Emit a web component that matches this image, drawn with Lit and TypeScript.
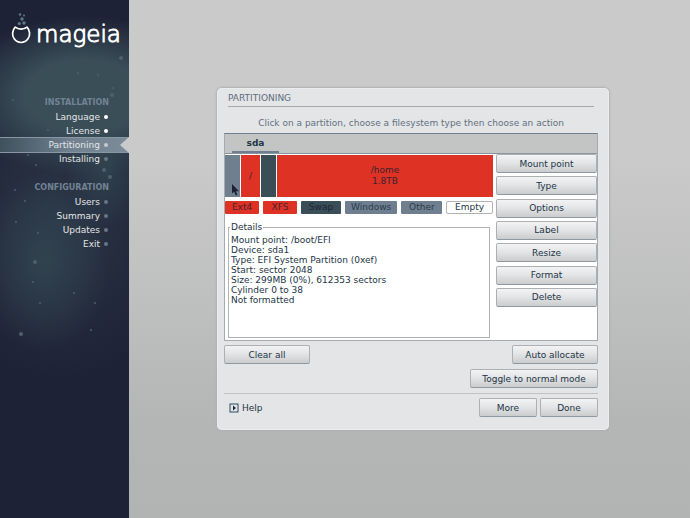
import { LitElement, html, svg, css, nothing } from "lit";
import { customElement, state } from "lit/decorators.js";
import { classMap } from "lit/directives/class-map.js";

interface Step {
  label: string;
  status: "done" | "current" | "todo";
}

const INSTALLATION: Step[] = [
  { label: "Language", status: "done" },
  { label: "License", status: "done" },
  { label: "Partitioning", status: "current" },
  { label: "Installing", status: "todo" },
];

const CONFIGURATION: Step[] = [
  { label: "Users", status: "todo" },
  { label: "Summary", status: "todo" },
  { label: "Updates", status: "todo" },
  { label: "Exit", status: "todo" },
];

const STARS: Array<[number, number, number]> = [
  [121, 58, 2], [78, 73, 1], [98, 75, 1], [113, 88, 1], [112, 95, 2], [13, 100, 1],
  [48, 130, 1], [28, 155, 1], [36, 165, 1], [104, 170, 2], [110, 177, 2], [15, 190, 1],
  [25, 201, 1], [16, 222, 1], [38, 233, 1], [35, 262, 2], [33, 282, 1], [74, 293, 1],
  [95, 303, 1], [21, 334, 2], [91, 330, 1], [40, 303, 1],
];

const FACTS = [
  "Mount point: /boot/EFI",
  "Device: sda1",
  "Type: EFI System Partition (0xef)",
  "Start: sector 2048",
  "Size: 299MB (0%), 612353 sectors",
  "Cylinder 0 to 38",
  "Not formatted",
];

const ACTIONS = ["Mount point", "Type", "Options", "Label", "Resize", "Format", "Delete"];

@customElement("install-steps")
export class InstallSteps extends LitElement {
  static styles = css`
    :host {
      display: block;
      position: relative;
      background:
        radial-gradient(ellipse 64px 90px at 44px 262px, #354954c0, #35495400),
        radial-gradient(ellipse 40px 60px at 106px 170px, #354954b0, #35495400),
        radial-gradient(ellipse 130px 80px at 84px 96px, #3a4e58 45%, #3a4e5800),
        radial-gradient(ellipse 130px 160px at 60px 220px, #3a4e5870, #3a4e5800),
        #1e2236;
      color: #e4e5e7;
      font-size: 9px;
      line-height: 14px;
    }
    .sky {
      position: absolute;
      inset: 0;
      width: 100%;
      height: 100%;
      fill: #4c616c;
    }
    .brand {
      position: relative;
      display: flex;
      align-items: flex-start;
      height: 84px;
      padding: 12px 0 0 11px;
      gap: 4px;
    }
    .flask {
      width: 21px;
      height: 33px;
      flex: none;
    }
    .name {
      margin-top: 8px;
      font-size: 23px;
      line-height: 28px;
      font-weight: 200;
      color: #fff;
      -webkit-text-stroke: 1px #fff;
    }
    section {
      position: relative;
      margin-bottom: 15px;
    }
    h2 {
      margin: 0;
      padding-right: 20px;
      text-align: right;
      font-size: 8px;
      line-height: 14px;
      font-weight: 700;
      color: #728394;
    }
    ol {
      list-style: none;
      margin: 0;
      padding: 0;
    }
    li {
      display: flex;
      justify-content: flex-end;
      align-items: center;
      gap: 4px;
      height: 14px;
      padding-right: 21px;
    }
    .dot {
      width: 4px;
      height: 4px;
      border-radius: 2px;
      background: #667788;
    }
    .done .dot {
      background: #fff;
    }
    .current {
      position: relative;
      height: 16px;
      margin: -1px 0;
      background: linear-gradient(90deg, #3f515d, #718190 55%, #7c8b98);
      border-block: 1px solid #8997a2;
      box-sizing: border-box;
    }
    .current::after {
      content: "";
      position: absolute;
      right: 0;
      top: -1px;
      bottom: -1px;
      width: 9px;
      background: #c9c9c9;
      clip-path: polygon(100% 0, 0 50%, 100% 100%);
    }
    .current .dot {
      background: #c9c9c9;
    }
  `;

  private group(title: string, steps: Step[]) {
    return html`<section>
      <h2>${title}</h2>
      <ol>
        ${steps.map(
          (s) => html`<li class=${s.status} aria-current=${s.status === "current" ? "step" : nothing}>
            ${s.label}<span class="dot"></span>
          </li>`
        )}
      </ol>
    </section>`;
  }

  render() {
    return html`
      <svg class="sky" aria-hidden="true">
        ${STARS.map(([x, y, r]) => svg`<circle cx=${x} cy=${y} r=${r} />`)}
      </svg>
      <div class="brand">
        <svg class="flask" viewBox="0 0 21 33" aria-hidden="true">
          <g fill="#5f7886">
            <circle cx="9" cy="2.5" r="1.2" /><circle cx="13" cy="3.5" r="1" />
            <circle cx="11" cy="7" r="1.7" /><circle cx="8.3" cy="11.5" r="1.6" />
            <circle cx="13" cy="11" r="1.8" />
          </g>
          <path
            d="M4.2 15.2C1.3 18.3.6 23.200 3.200 26.800C6.700 31.700 13.500 31.700 17 26.800C19.600 23.200 18.900 18.300 16 15.200C13 17.800 7.200 17.800 4.200 15.200Z"
            fill="none" stroke="#fff" stroke-width="1.700" stroke-linejoin="round"
          />
        </svg>
        <span class="name">mageia</span>
      </div>
      <nav>${this.group("INSTALLATION", INSTALLATION)} ${this.group("CONFIGURATION", CONFIGURATION)}</nav>
    `;
  }
}

@customElement("app-root")
export class AppRoot extends LitElement {
  static styles = css`
    :host {
      display: grid;
      grid-template-columns: 129px 1fr;
      min-height: 100vh;
      font-family: "DejaVu Sans", sans-serif;
      font-size: 9px;
      line-height: 10px;
      color: #223446;
    }
    main {
      padding: 88px 81px 16px 88px;
      background: linear-gradient(#cacaca 30%, #b4b6b5 82%, #b2b4b4);
    }
    .dialog {
      box-sizing: border-box;
      padding: 4px 11px 13px 7px;
      border-radius: 5px;
      background: #e4e5e7;
      box-shadow: inset 0 0 0 1px #ececee, 0 0 2px 1px #aeb1b3;
    }
    h1 {
      margin: 0 4px;
      padding-bottom: 2px;
      border-bottom: 1px solid #a5a9ae;
      font-size: 9px;
      line-height: 12px;
      font-weight: 400;
      color: #5d6c7b;
    }
    .hint {
      margin: 0;
      padding: 10px 0 4px;
      text-align: center;
      line-height: 12px;
      color: #617080;
    }
    .disk {
      border: 1px solid #a5aab0;
      border-top-color: #6f7f90;
      background: #fff;
    }
    .tabs {
      height: 19px;
      background: #c3c4c4;
      border-bottom: 1px solid #8b96a1;
    }
    button {
      font: inherit;
      color: inherit;
      margin: 0;
      padding: 0;
      cursor: pointer;
    }
    .tab {
      height: 19px;
      width: 47px;
      margin-left: 7px;
      border: 0;
      border-bottom: 2px solid #6f7f90;
      background: none;
      font-weight: 700;
    }
    .body {
      display: grid;
      grid-template-columns: minmax(0, 1fr) 101px;
      column-gap: 3px;
    }
    .map {
      display: flex;
      gap: 1px;
      height: 42px;
      margin-top: 1px;
    }
    .part {
      border: 0;
      width: 15px;
      line-height: 11px;
      color: #3c2231;
      background: #dd3224;
    }
    .part.efi {
      background: #6f7f90;
      position: relative;
    }
    .part.root {
      width: 19px;
    }
    .part.swap {
      background: #3a4e58;
    }
    .part.home {
      flex: 1;
    }
    .cursor {
      position: absolute;
      left: 6px;
      bottom: 1px;
      width: 9px;
      height: 12px;
    }
    .kinds {
      display: flex;
      gap: 4px;
      margin: 4px 0 7px;
    }
    .kind {
      flex: 35 1 0;
      height: 13px;
      border: 0;
      border-radius: 1px;
      line-height: 13px;
      background: #dd3224;
      color: #4c2230;
    }
    .kind.swap {
      flex-grow: 41;
      background: #3a4e58;
      color: #1e2236;
    }
    .kind.windows {
      flex-grow: 54;
      background: #6f7f90;
      color: #2c3d4c;
    }
    .kind.other {
      flex-grow: 42;
      background: #6f7f90;
      color: #2c3d4c;
    }
    .kind.empty {
      flex-grow: 46;
      border: 1px solid #b0b2b4;
      border-radius: 2px;
      line-height: 11px;
      background: #fff;
      color: #223446;
    }
    fieldset {
      box-sizing: border-box;
      height: 117px;
      margin: 0 3px 2px;
      padding: 2px;
      border: 1px solid #b0b2b4;
      min-width: 0;
    }
    legend {
      padding: 0 1px;
      margin-left: -1px;
      line-height: 12px;
    }
    .facts {
      margin: 0;
      padding: 0;
      list-style: none;
    }
    .actions {
      display: flex;
      flex-direction: column;
      justify-content: space-between;
      height: 153px;
    }
    .btn {
      box-sizing: border-box;
      height: 19px;
      border: 1px solid #adb0b2;
      border-bottom-color: #8f979f;
      border-radius: 2px;
      background: linear-gradient(#f3f3f4, #e4e5e7 45%, #cbcccd);
    }
    .row {
      display: flex;
      justify-content: space-between;
      margin-top: 4px;
    }
    .row.end {
      justify-content: flex-end;
      margin-top: 5px;
    }
    .medium {
      width: 86px;
    }
    .wide {
      width: 128px;
    }
    .small {
      width: 58px;
    }
    footer {
      display: flex;
      align-items: center;
      gap: 3px;
      margin-top: 5px;
      padding-top: 4px;
      border-top: 1px solid #c0c2c4;
    }
    .help {
      display: flex;
      align-items: center;
      gap: 3px;
      margin: 0 auto 0 5px;
      border: 0;
      background: none;
    }
    .help svg {
      width: 10px;
      height: 10px;
    }
  `;

  @state() private kinds = ["Ext4", "XFS", "Swap", "Windows", "Other", "Empty"];

  private button(label: string, width = "") {
    return html`<button class="btn ${width}">${label}</button>`;
  }

  render() {
    return html`
      <install-steps></install-steps>
      <main>
        <div class="dialog">
          <h1>PARTITIONING</h1>
          <p class="hint">Click on a partition, choose a filesystem type then choose an action</p>
          <div class="disk">
            <div class="tabs" role="tablist">
              <button class="tab" role="tab" aria-selected="true">sda</button>
            </div>
            <div class="body">
              <div>
                <div class="map">
                  <button class="part efi" aria-label="sda1">
                    <svg class="cursor" viewBox="0 0 9 12">
                      <path d="M1 0V9.500L3.200 7.700L4.800 11.500L6.500 10.800L4.900 7.200H8Z" fill="#1e2236" />
                    </svg>
                  </button>
                  <button class="part root">/</button>
                  <button class="part swap" aria-label="swap"></button>
                  <button class="part home">/home<br />1.8TB</button>
                </div>
                <div class="kinds">
                  ${this.kinds.map(
                    (k) => html`<button class=${classMap({ kind: true, [k.toLowerCase()]: true })}>${k}</button>`
                  )}
                </div>
                <fieldset>
                  <legend>Details</legend>
                  <ul class="facts">
                    ${FACTS.map((f) => html`<li>${f}</li>`)}
                  </ul>
                </fieldset>
              </div>
              <div class="actions">${ACTIONS.map((a) => this.button(a))}</div>
            </div>
          </div>
          <div class="row">${this.button("Clear all", "medium")} ${this.button("Auto allocate", "medium")}</div>
          <div class="row end">${this.button("Toggle to normal mode", "wide")}</div>
          <footer>
            <button class="help">
              <svg viewBox="0 0 10 10" aria-hidden="true">
                <rect x="1" y="1" width="8" height="8" fill="none" stroke="#2c4a60" />
                <path d="M4 2.500V7.500L7 5Z" fill="#1e2236" />
              </svg>
              Help
            </button>
            ${this.button("More", "small")} ${this.button("Done", "small")}
          </footer>
        </div>
      </main>
    `;
  }
}
